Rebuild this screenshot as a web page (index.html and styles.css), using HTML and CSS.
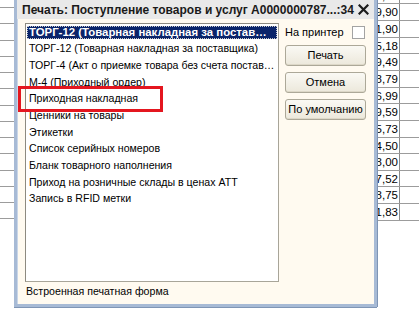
FILE: index.html
```html
<!DOCTYPE html>
<html>
<head>
<meta charset="utf-8">
<title>Печать</title>
<link rel="stylesheet" href="styles.css">
</head>
<body>
<div class="desk">
  <div class="grid-left">
    <div class="gl"></div><div class="gl"></div><div class="gl"></div><div class="gl"></div>
    <div class="gl"></div><div class="gl"></div><div class="gl"></div><div class="gl"></div>
    <div class="gl"></div><div class="gl"></div><div class="gl"></div><div class="gl"></div>
    <div class="gl"></div><div class="gl"></div>
  </div>

  <div class="window">
    <div class="titlebar">
      <span class="title">Печать: Поступление товаров и услуг А0000000787...:34</span>
      <svg class="close" width="11" height="11" viewBox="0 0 11 11">
        <path d="M1.5 1.5 L9.5 9.5 M9.5 1.5 L1.5 9.5" stroke="#1c1c1c" stroke-width="2.2" stroke-linecap="square"/>
      </svg>
    </div>
    <div class="wbody">
      <div class="list">
        <div class="item selected"><span class="lbl">ТОРГ-12 (Товарная накладная за поставщика)</span></div>
        <div class="item"><span class="lbl">ТОРГ-12 (Товарная накладная за поставщика)</span></div>
        <div class="item"><span class="lbl">ТОРГ-4 (Акт о приемке товара без счета поставщика)</span></div>
        <div class="item"><span class="lbl">М-4 (Приходный ордер)</span></div>
        <div class="item"><span class="lbl">Приходная накладная</span></div>
        <div class="item"><span class="lbl">Ценники на товары</span></div>
        <div class="item"><span class="lbl">Этикетки</span></div>
        <div class="item"><span class="lbl">Список серийных номеров</span></div>
        <div class="item"><span class="lbl">Бланк товарного наполнения</span></div>
        <div class="item"><span class="lbl">Приход на розничные склады в ценах АТТ</span></div>
        <div class="item"><span class="lbl">Запись в RFID метки</span></div>
      </div>
      <div class="side">
        <div class="printer">
          <span>На принтер</span>
          <span class="check"></span>
        </div>
        <div class="btn">Печать</div>
        <div class="btn">Отмена</div>
        <div class="btn">По умолчанию</div>
      </div>
      <div class="status">Встроенная печатная форма</div>
    </div>
    <div class="mark"></div>
  </div>

  <div class="grid-right">
    <div class="gr top"><span class="num">13,17</span><span class="blank"></span></div>
    <div class="gr"><span class="num">119,90</span><span class="blank"></span></div>
    <div class="gr"><span class="num">121,90</span><span class="blank"></span></div>
    <div class="gr"><span class="num">135,18</span><span class="blank"></span></div>
    <div class="gr"><span class="num">139,49</span><span class="blank"></span></div>
    <div class="gr"><span class="num">148,79</span><span class="blank"></span></div>
    <div class="gr"><span class="num">176,99</span><span class="blank"></span></div>
    <div class="gr"><span class="num">179,59</span><span class="blank"></span></div>
    <div class="gr"><span class="num">185,73</span><span class="blank"></span></div>
    <div class="gr"><span class="num">194,50</span><span class="blank"></span></div>
    <div class="gr"><span class="num">178,00</span><span class="blank"></span></div>
    <div class="gr"><span class="num">117,52</span><span class="blank"></span></div>
    <div class="gr"><span class="num">128,75</span><span class="blank"></span></div>
    <div class="gr"><span class="num">141,83</span><span class="blank"></span></div>
  </div>
</div>
</body>
</html>
```

FILE: styles.css
```css
body {
  margin: 0;
  background: #ffffff;
  font-family: "Liberation Sans", Arial, sans-serif;
  font-size: 10.6px;
  color: #000;
}

.desk {
  display: flex;
  width: 419px;
  height: 310px;
  overflow: hidden;
}

/* background grid, left of the dialog */
.grid-left {
  width: 14px;
  flex: none;
  padding-top: 7px;
}
.gl {
  height: 15.25px;
  border-top: 1px solid #9c9c9c;
}

/* dialog window */
.window {
  position: relative;
  width: 357px;
  height: 304px;
  flex: none;
  border: 3px solid #a7bad5;
  border-top: none;
  box-shadow: inset 1px 0 0 #c9d6e8, 1px 0 0 #7f95b5, 0 1px 0 #7f95b5;
  background: #fffaf0;
  display: flex;
  flex-direction: column;
}

.titlebar {
  height: 19px;
  background: #e9e9e9;
  display: flex;
  align-items: center;
  padding: 0 6px 0 5px;
  box-sizing: border-box;
}
.title {
  font-weight: bold;
  font-size: 12px;
  color: #1a1a1a;
  white-space: nowrap;
  flex: 1;
}
.close {
  flex: none;
  margin-left: 4px;
}

.wbody {
  display: grid;
  grid-template-columns: 254px 81px;
  column-gap: 6px;
  padding: 4px 8px 0 8px;
}

.list {
  height: 257px;
  background: #fff;
  border: 1px solid #a8a599;
  border-top-color: #8d8a80;
  border-left-color: #8d8a80;
}
.item {
  height: 16.67px;
  display: flex;
  align-items: center;
  padding: 0 1px;
}
.lbl {
  display: block;
  width: 100%;
  line-height: 13px;
  padding: 0 2px;
  white-space: nowrap;
  overflow: hidden;
  text-overflow: ellipsis;
}
.selected .lbl {
  background: #0a246a;
  color: #fff;
  font-weight: bold;
  font-size: 11.4px;
  outline: 1px dotted #c8c8c8;
  outline-offset: -1px;
}

.side {
  display: flex;
  flex-direction: column;
  gap: 6px;
}
.printer {
  display: flex;
  justify-content: space-between;
  align-items: center;
  height: 14px;
  margin-top: 2px;
  font-size: 11px;
}
.check {
  width: 11px;
  height: 11px;
  background: #fff;
  border: 1px solid #a3a3a3;
  margin-right: 1px;
}
.btn {
  height: 19px;
  line-height: 19px;
  text-align: center;
  font-size: 11px;
  border: 1px solid #aca898;
  border-radius: 3px;
  background: linear-gradient(#faf9f4, #ece8db);
  box-shadow: inset 0 -1px 0 #ddd8c8;
}

.status {
  grid-column: 1 / 3;
  padding: 2px 0 0 1px;
  line-height: 14px;
}

/* red highlight drawn over the list */
.mark {
  position: absolute;
  left: 1px;
  top: 86px;
  width: 139px;
  height: 20px;
  border: 3px solid #e4161f;
}

/* background table, right of the dialog */
.grid-right {
  flex: 1;
  margin-top: -12.4px;
  font-size: 11.5px;
}
.gr {
  display: flex;
  height: 15.67px;
  border-bottom: 1px solid #9c9c9c;
}
.num {
  width: 21px;
  flex: none;
  overflow: hidden;
  direction: rtl;
  text-align: right;
  white-space: nowrap;
  line-height: 16px;
  padding-right: 1px;
  border-right: 1px solid #8a8a8a;
}
.blank {
  flex: 1;
}
```
